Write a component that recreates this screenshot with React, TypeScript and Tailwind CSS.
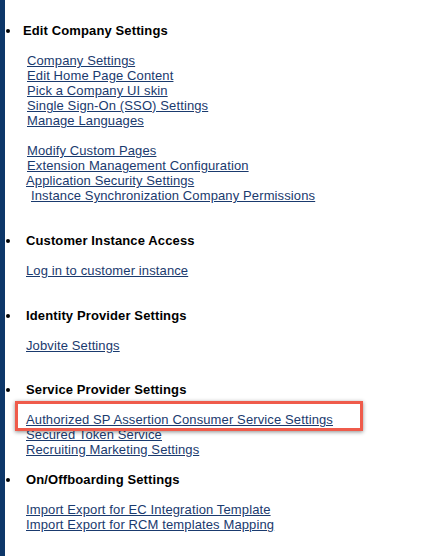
const sections: { title: string; indent: string; blocks: { text: string; pad: string }[][]; gap: string }[] = [
  {
    title: "Edit Company Settings",
    indent: "ml-[13px]",
    gap: "mb-[30px]",
    blocks: [
      [
        { text: "Company Settings", pad: "pl-[22px]" },
        { text: "Edit Home Page Content", pad: "pl-[22px]" },
        { text: "Pick a Company UI skin", pad: "pl-[22px]" },
        { text: "Single Sign-On (SSO) Settings", pad: "pl-[22px]" },
        { text: "Manage Languages", pad: "pl-[22px]" },
      ],
      [
        { text: "Modify Custom Pages", pad: "pl-[22px]" },
        { text: "Extension Management Configuration", pad: "pl-[22px]" },
        { text: "Application Security Settings", pad: "pl-[21px]" },
        { text: "Instance Synchronization Company Permissions", pad: "pl-[26px]" },
      ],
    ],
  },
  {
    title: "Customer Instance Access",
    indent: "ml-[16px]",
    gap: "mb-[30px]",
    blocks: [[{ text: "Log in to customer instance", pad: "pl-[21px]" }]],
  },
  {
    title: "Identity Provider Settings",
    indent: "ml-[16px]",
    gap: "mb-[29px]",
    blocks: [[{ text: "Jobvite Settings", pad: "pl-[21px]" }]],
  },
  {
    title: "Service Provider Settings",
    indent: "ml-[16px]",
    gap: "mb-[15px]",
    blocks: [
      [
        { text: "Authorized SP Assertion Consumer Service Settings", pad: "pl-[21px]" },
        { text: "Secured Token Service", pad: "pl-[21px]" },
        { text: "Recruiting Marketing Settings", pad: "pl-[21px]" },
      ],
    ],
  },
  {
    title: "On/Offboarding Settings",
    indent: "ml-[16px]",
    gap: "mb-0",
    blocks: [
      [
        { text: "Import Export for EC Integration Template", pad: "pl-[21px]" },
        { text: "Import Export for RCM templates Mapping", pad: "pl-[21px]" },
      ],
    ],
  },
];

export default function App() {
  return (
    <div className="relative flex h-[556px] w-[437px] overflow-hidden bg-white font-['Liberation_Sans',Arial,sans-serif] text-[13px] leading-[15px] tracking-[0.12px]">
      <div className="w-[5px] shrink-0 bg-[#0d3769]" />
      <ul className="flex-1 pt-[23px]">
        {sections.map((s) => (
          <li key={s.title} className={s.gap}>
            <div className="flex items-center">
              <span className="ml-[1px] h-[4px] w-[4px] shrink-0 rounded-full bg-black" />
              <span className={`${s.indent} font-bold text-black`}>{s.title}</span>
            </div>
            {s.blocks.map((block, i) => (
              <div key={i} className="mt-[15px]">
                {block.map((l) => (
                  <div key={l.text} className={l.pad}>
                    <a href="#" className="text-[#1a3a6e] underline underline-offset-[1px]">
                      {l.text}
                    </a>
                  </div>
                ))}
              </div>
            ))}
          </li>
        ))}
      </ul>
      <div className="pointer-events-none absolute left-[15px] top-[401px] h-[30px] w-[348px] border-[3px] border-[#ef5b4b] shadow-[0_1px_4px_rgba(0,0,0,0.45)]" />
    </div>
  );
}
